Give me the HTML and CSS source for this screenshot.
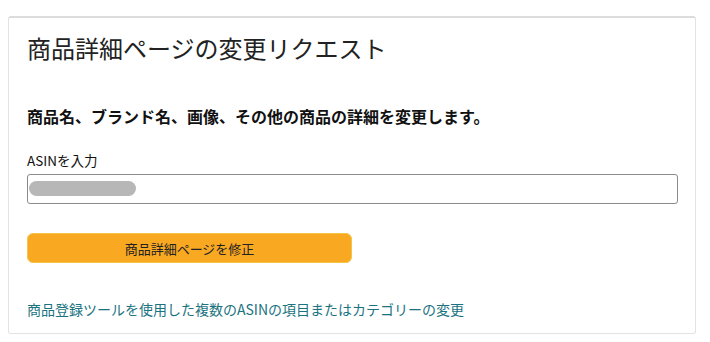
FILE: index.html
```html
<!DOCTYPE html>
<html lang="ja">
<head>
<meta charset="utf-8">
<link rel="stylesheet" href="styles.css">
</head>
<body>
<div class="card">
  <h1 class="title">商品詳細ページの変更リクエスト</h1>
  <p class="lead">商品名、ブランド名、画像、その他の商品の詳細を変更します。</p>
  <label class="label">ASINを入力</label>
  <div class="input"><span class="redact"></span></div>
  <button class="btn">商品詳細ページを修正</button>
  <a class="link" href="#">商品登録ツールを使用した複数のASINの項目またはカテゴリーの変更</a>
</div>
</body>
</html>
```
FILE: styles.css
```css
html, body {
  margin: 0;
  padding: 0;
  background: #fff;
}
body {
  padding: 16px 14px 0 8px;
  font-family: "Noto Sans CJK JP", "Noto Sans", sans-serif;
  color: #111;
}
.card {
  box-sizing: border-box;
  width: 688px;
  height: 318px;
  border: 1px solid #e3e3e3;
  border-top: 2px solid #dcdcdc;
  border-radius: 3px;
  padding: 14px 17px 0 18px;
  display: flex;
  flex-direction: column;
  align-items: flex-start;
}
.title {
  margin: 0;
  font-size: 24px;
  line-height: 32px;
  font-weight: 400;
  color: #222;
}
.lead {
  margin: 40px 0 0;
  font-size: 16px;
  line-height: 24px;
  font-weight: 700;
  color: #111;
}
.label {
  margin-top: 23px;
  font-size: 13.5px;
  line-height: 18px;
  color: #111;
}
.input {
  box-sizing: border-box;
  margin-top: 5px;
  width: 100%;
  height: 30px;
  border: 1px solid #8a8a8a;
  border-radius: 3px;
  padding: 6px 0 0 1px;
}
.redact {
  display: block;
  width: 107px;
  height: 15px;
  border-radius: 8px;
  background: #b7b7b7;
}
.btn {
  box-sizing: border-box;
  margin-top: 29px;
  width: 325px;
  height: 30px;
  border: 1px solid #f5c24a;
  border-radius: 6px;
  background: #f9a822;
  font-family: inherit;
  font-size: 13px;
  color: #222;
  padding: 0;
}
.link {
  margin-top: 36px;
  font-size: 14px;
  line-height: 20px;
  color: #1a737f;
  text-decoration: none;
}
```
